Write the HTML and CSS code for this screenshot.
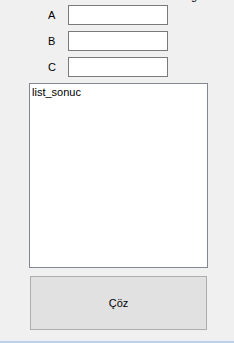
FILE: index.html
```html
<!DOCTYPE html>
<html>

<head>
    <link rel="stylesheet" href="styles.css">
</head>

<body>

    <div id="form">
        <div class="clip"><span class="cut">g</span></div>

        <div class="fields">
            <div class="row">
                <label class="name">A</label>
                <input class="box" type="text">
            </div>
            <div class="row">
                <label class="name">B</label>
                <input class="box" type="text">
            </div>
            <div class="row">
                <label class="name">C</label>
                <input class="box" type="text">
            </div>
        </div>

        <div id="list">list_sonuc</div>

        <button id="solve">Çöz</button>
    </div>

    <div id="edge"></div>

</body>

</html>
```

FILE: styles.css
```css
body {
    font-family: "Liberation Sans", Arial, sans-serif;
    font-size: 11px;
    background-color: #f0f0f0;
    margin: 0;
    height: 343px;
    display: flex;
    flex-direction: column;
    overflow: hidden;
}

#form {
    flex-grow: 1;
}

.clip {
    height: 2px;
    overflow: hidden;
    padding-left: 191px;
}

.cut {
    display: block;
    margin-top: -9px;
    line-height: 11px;
}

.fields {
    display: flex;
    flex-direction: column;
    gap: 6px;
    padding-top: 3px;
    padding-left: 48px;
}

.row {
    display: flex;
    align-items: center;
    height: 20px;
}

.name {
    width: 20px;
    color: #000000;
}

.box {
    box-sizing: border-box;
    width: 100px;
    height: 20px;
    margin: 0;
    padding: 0 2px;
    border: 1px solid #7a7a7a;
    background-color: #ffffff;
    font: inherit;
    outline: none;
}

#list {
    box-sizing: border-box;
    width: 179px;
    height: 185px;
    margin: 6px 0 0 29px;
    padding: 2px 0 0 2px;
    border: 1px solid #828790;
    background-color: #ffffff;
    line-height: 13px;
}

#solve {
    display: block;
    box-sizing: border-box;
    width: 177px;
    height: 54px;
    margin: 8px 0 0 30px;
    border: 1px solid #adadad;
    background-color: #e1e1e1;
    font: inherit;
    color: #000000;
    padding: 0;
}

#edge {
    height: 2px;
    background-color: #b9d1ea;
}
```
